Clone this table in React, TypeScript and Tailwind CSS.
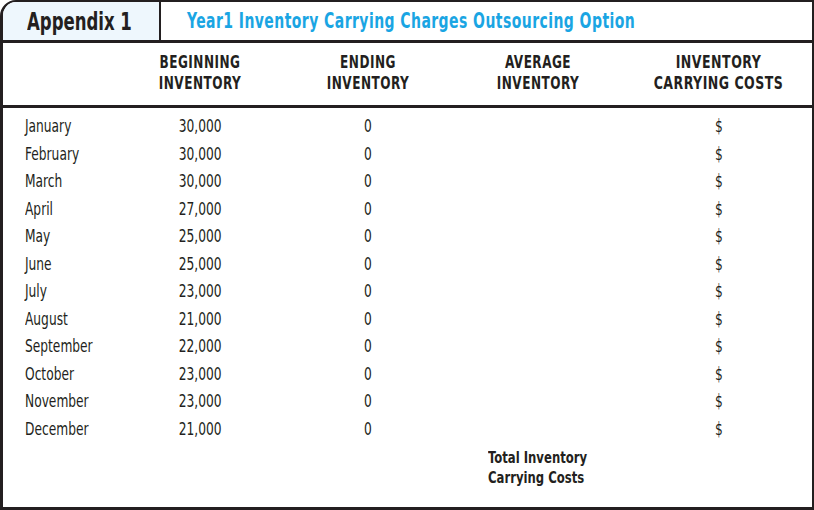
const rows: [string, string][] = [
  ["January", "30,000"],
  ["February", "30,000"],
  ["March", "30,000"],
  ["April", "27,000"],
  ["May", "25,000"],
  ["June", "25,000"],
  ["July", "23,000"],
  ["August", "21,000"],
  ["September", "22,000"],
  ["October", "23,000"],
  ["November", "23,000"],
  ["December", "21,000"],
];

const font = { fontFamily: '"Liberation Sans Narrow", "DejaVu Sans Condensed", "Liberation Sans", sans-serif' };
const cols = "grid grid-cols-[112px_170px_166px_174px_1fr]";

export default function App() {
  return (
    <div className="w-[814px] h-[510px] bg-white text-[#231f20]" style={font}>
      <div className="h-full flex flex-col border-t-2 border-r-2 border-l-[3px] border-b-[3px] border-[#231f20] rounded-tl-[16px] overflow-hidden">
        {/* title bar */}
        <div className="h-[41px] flex border-b-[3px] border-[#231f20] shrink-0">
          <div className="w-[158px] bg-[#eef7fd] border-r-[2px] border-[#231f20] flex items-center pl-[24px]">
            <span className="inline-block whitespace-nowrap text-[25px] font-bold leading-none scale-x-[0.735] origin-left">Appendix 1</span>
          </div>
          <div className="flex-1 flex items-center pl-[26px] pt-[1px]">
            <span className="inline-block whitespace-nowrap text-[21px] font-bold leading-none text-[#1aa5e3] tracking-[0.6px] scale-x-[0.74] origin-left">
              Year1 Inventory Carrying Charges Outsourcing Option
            </span>
          </div>
        </div>

        {/* column headings */}
        <div className={`${cols} h-[65px] border-b-[3px] border-[#231f20] shrink-0 pt-[9px] text-[17px] font-bold leading-[21px] tracking-[0.6px] text-center`}>
          <div />
          <div className="scale-x-[0.79] whitespace-nowrap">BEGINNING<br />INVENTORY</div>
          <div className="scale-x-[0.79] whitespace-nowrap">ENDING<br />INVENTORY</div>
          <div className="scale-x-[0.79] whitespace-nowrap">AVERAGE<br />INVENTORY</div>
          <div className="scale-x-[0.82] whitespace-nowrap">INVENTORY<br />CARRYING COSTS</div>
        </div>

        {/* data rows */}
        <div className="pt-[5px] text-[17px] leading-[27.5px]">
          {rows.map(([m, b]) => (
            <div key={m} className={cols}>
              <div className="pl-[22px]">
                <span className="inline-block scale-x-[0.8] origin-left">{m}</span>
              </div>
              <div className="text-right pr-[64px]">
                <span className="inline-block scale-x-[0.8] origin-right">{b}</span>
              </div>
              <div className="text-center">
                <span className="inline-block scale-x-[0.8]">0</span>
              </div>
              <div />
              <div className="text-center">
                <span className="inline-block scale-x-[0.8]">$</span>
              </div>
            </div>
          ))}
          <div className={`${cols} mt-[5px]`}>
            <div />
            <div />
            <div />
            <div className="pl-[37px] text-[16px] font-bold leading-[20px]">
              <div className="scale-x-[0.81] origin-left whitespace-nowrap">
                Total Inventory<br />Carrying Costs
              </div>
            </div>
            <div />
          </div>
        </div>
      </div>
    </div>
  );
}
